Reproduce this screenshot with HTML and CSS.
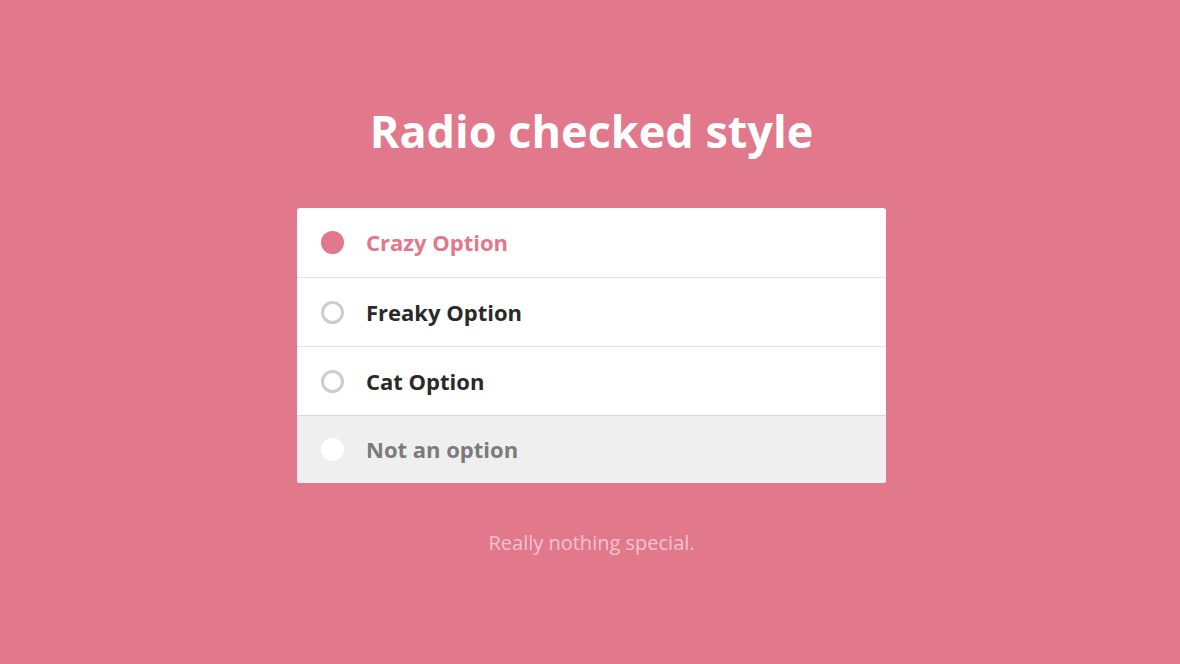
FILE: index.html
```html
<!DOCTYPE html>
<html>
<head>
<meta charset="utf-8">
<link rel="stylesheet" href="styles.css">
</head>
<body>
<main class="page">
  <h1 class="title">Radio checked style</h1>
  <div class="card">
    <label class="row checked"><span class="dot"></span><span class="label">Crazy Option</span></label>
    <label class="row"><span class="dot"></span><span class="label">Freaky Option</span></label>
    <label class="row"><span class="dot"></span><span class="label">Cat Option</span></label>
    <label class="row disabled"><span class="dot"></span><span class="label">Not an option</span></label>
  </div>
  <p class="note">Really nothing special.</p>
</main>
</body>
</html>
```
FILE: styles.css
```css
html, body {
  margin: 0;
  padding: 0;
  height: 100%;
}
body {
  background: #e1788b;
  font-family: "Open Sans", "Liberation Sans", sans-serif;
}
.page {
  display: flex;
  flex-direction: column;
  align-items: center;
  padding-top: 100px;
  padding-left: 3px;
}
.title {
  margin: 0;
  color: #fff;
  font-size: 45px;
  font-weight: 700;
  line-height: 62px;
}
.card {
  margin-top: 46px;
  width: 589px;
  background: #fff;
  border-radius: 3px;
  overflow: hidden;
}
.row {
  display: flex;
  align-items: center;
  height: 69px;
  padding-left: 24px;
  border-top: 1px solid #e2e2e2;
  box-sizing: border-box;
}
.row:first-child {
  border-top: none;
}
.row.disabled {
  height: 68px;
  background: #efefef;
  border-top-color: #d6d6d6;
}
.dot {
  width: 23px;
  height: 23px;
  border-radius: 50%;
  box-sizing: border-box;
  border: 3px solid #cdcdcd;
  background: #fff;
  flex: none;
}
.checked .dot {
  border: none;
  background: #e1788b;
}
.disabled .dot {
  border: none;
  background: #fff;
}
.label {
  margin-left: 22px;
  font-size: 22px;
  font-weight: 700;
  line-height: 28px;
  margin-bottom: 1px;
  color: #2a2a2a;
}
.checked .label {
  color: #e1788b;
}
.disabled .label {
  color: #7b7b7b;
}
.note {
  margin: 46px 0 0;
  color: #f6c3cd;
  font-size: 20px;
  line-height: 28px;
}
```
